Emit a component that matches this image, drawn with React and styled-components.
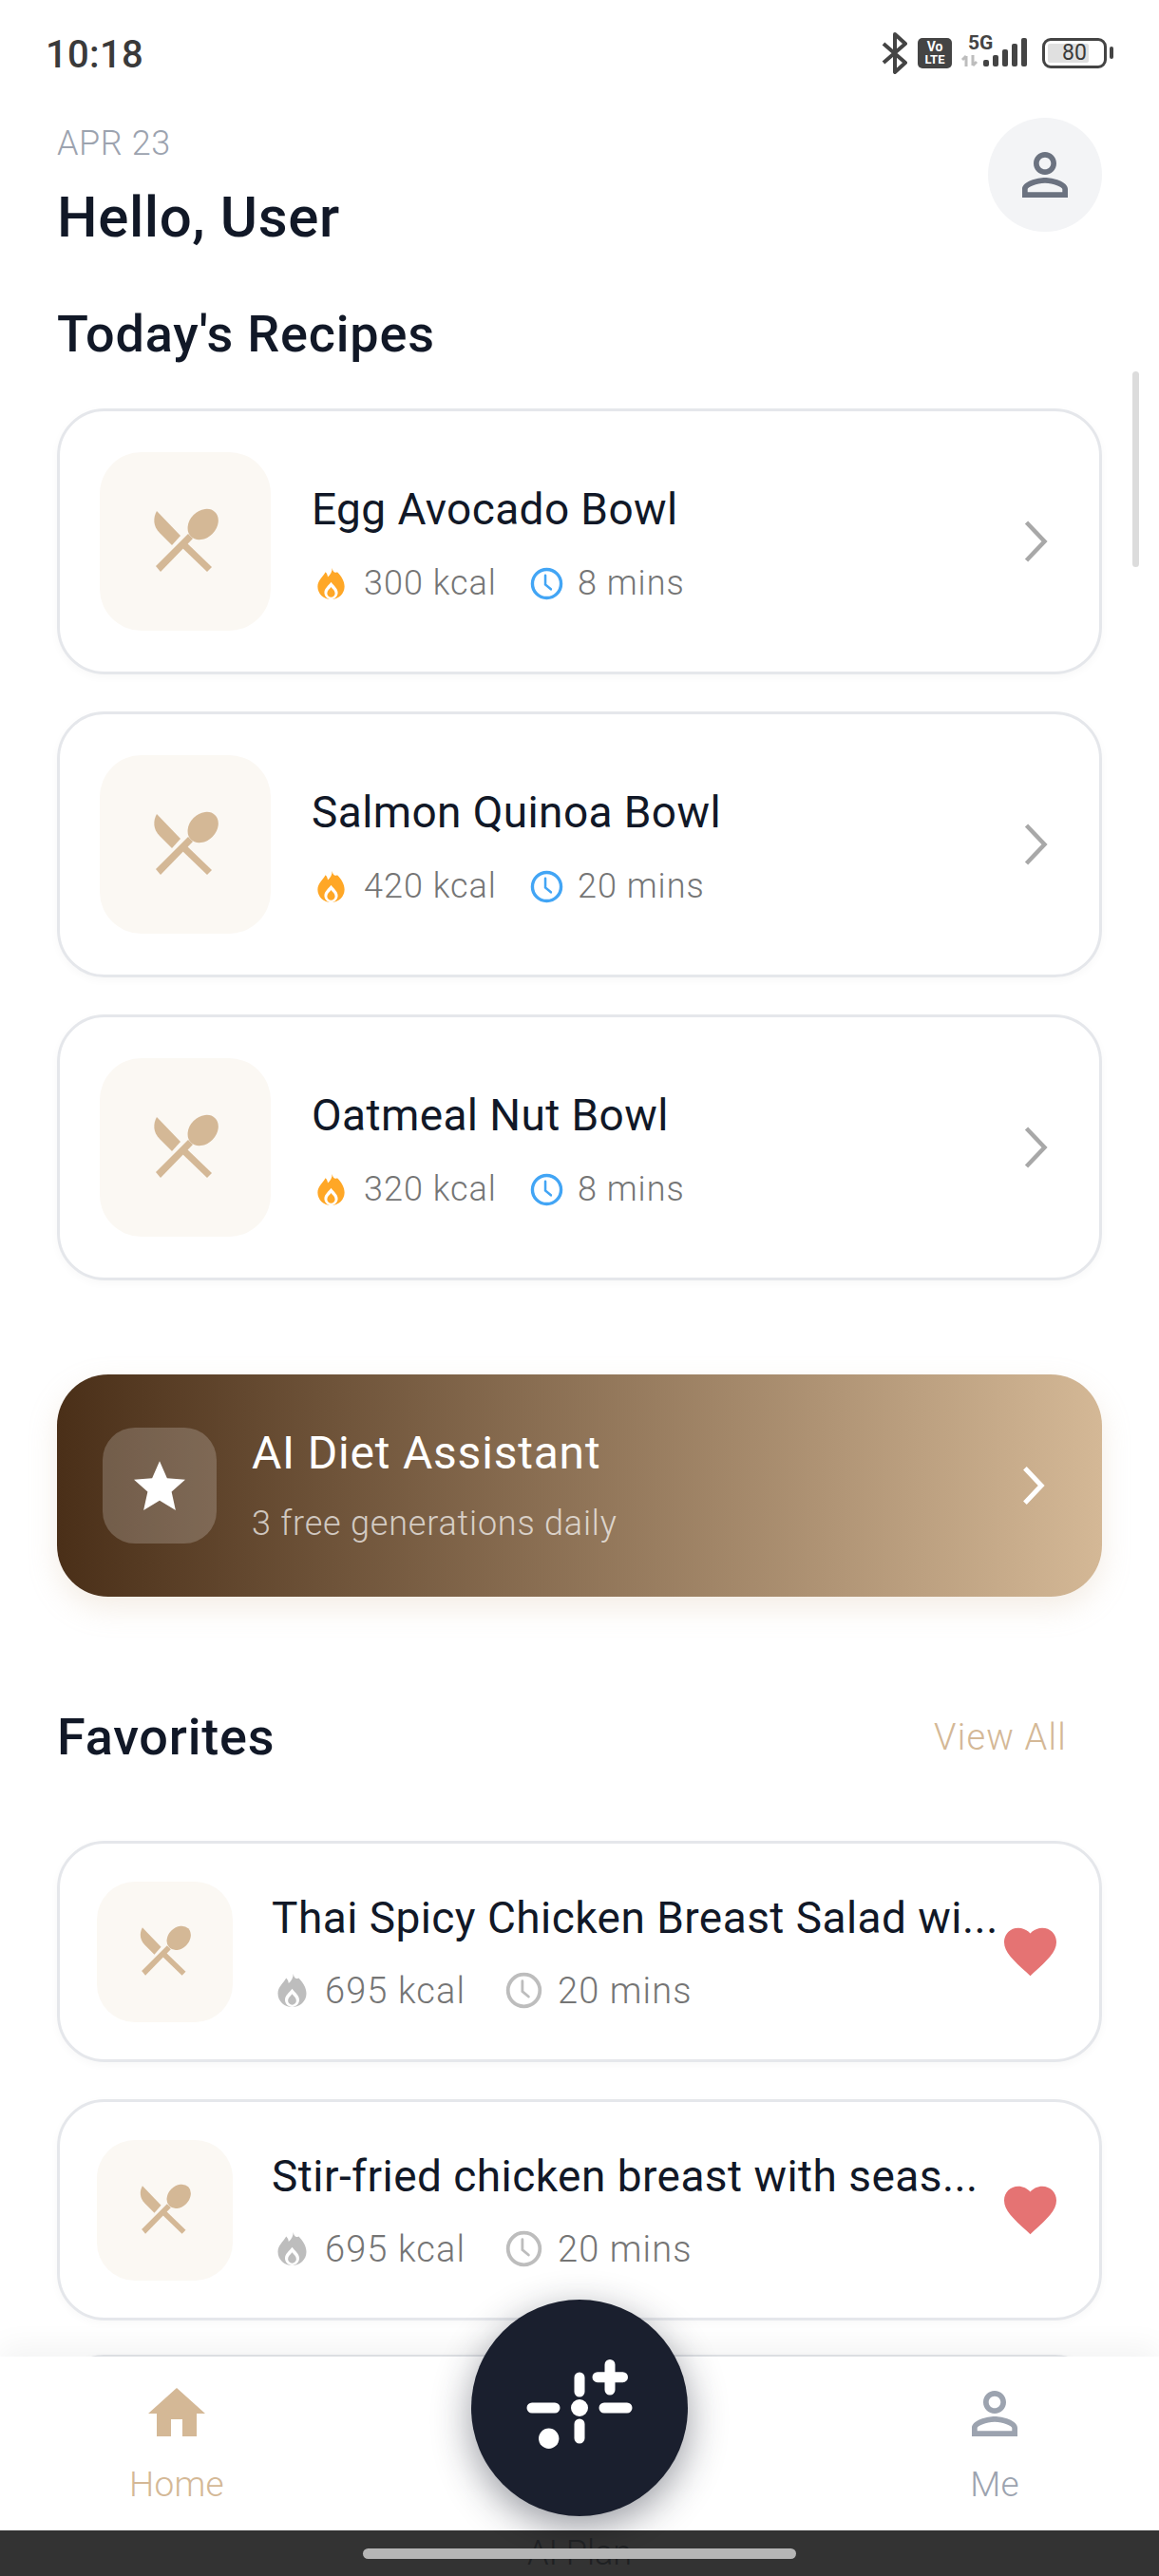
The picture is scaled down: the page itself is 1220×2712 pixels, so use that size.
import React from "react";
import styled, { createGlobalStyle } from "styled-components";

const GlobalStyle = createGlobalStyle`
  html, body {
    margin: 0;
    padding: 0;
    background: #ffffff;
    font-family: Roboto, "Liberation Sans", sans-serif;
  }
  * { box-sizing: border-box; }
`;

const Screen = styled.div`
  position: relative;
  width: 1220px;
  height: 2712px;
  display: flex;
  flex-direction: column;
  overflow: hidden;
  background: #ffffff;
`;

const StatusBar = styled.div`
  flex: none;
  height: 112px;
  padding: 0 55px 0 48px;
  display: flex;
  align-items: center;
  justify-content: space-between;
  color: #3a3a3a;
`;

const Clock = styled.span`
  font-size: 40px;
  font-weight: 500;
  letter-spacing: 0.3px;
  margin-top: 2px;
`;

const StatusIcons = styled.div`
  display: flex;
  align-items: center;
`;

const Battery = styled.div`
  position: relative;
  width: 68px;
  height: 32px;
  margin-left: 13px;
  border: 3px solid #444;
  border-radius: 9px;
  padding: 3px;
  display: flex;
  &::before {
    content: "";
    width: 43px;
    background: #e0e0e0;
    border-radius: 2px;
  }
  &::after {
    content: "";
    position: absolute;
    right: -10px;
    top: 6px;
    width: 4px;
    height: 13px;
    background: #444;
    border-radius: 2px;
  }
`;

const BatteryLevel = styled.span`
  position: absolute;
  left: 0;
  right: 0;
  top: -1px;
  text-align: center;
  font-size: 23px;
  line-height: 27px;
  color: #3a3a3a;
`;

const Content = styled.main`
  flex: 1;
  min-height: 0;
  overflow: hidden;
  padding: 12px 60px 0;
`;

const Header = styled.header`
  display: flex;
  justify-content: space-between;
  align-items: flex-start;
  height: 120px;
`;

const DateLabel = styled.div`
  font-size: 36px;
  line-height: 42px;
  font-weight: 300;
  letter-spacing: 0.6px;
  color: #9ca3af;
  margin-top: 6px;
`;

const Greeting = styled.h1`
  margin: 23px 0 0;
  font-size: 60px;
  line-height: 68px;
  font-weight: 500;
  letter-spacing: 0.6px;
  color: #111827;
`;

const Avatar = styled.div`
  width: 120px;
  height: 120px;
  border-radius: 50%;
  background: #f3f4f6;
  display: flex;
  align-items: center;
  justify-content: center;
`;

const SectionTitle = styled.h2`
  margin: ${(p) => p.$top}px 0 0;
  font-size: 54px;
  line-height: 64px;
  font-weight: 500;
  letter-spacing: 0.8px;
  color: #111827;
`;

const RecipeList = styled.div`
  display: flex;
  flex-direction: column;
  gap: 39px;
  margin-top: 46px;
`;

const Card = styled.article`
  display: flex;
  align-items: center;
  background: #ffffff;
  border: 3px solid #e5e7eb;
  border-radius: 50px;
  box-shadow: 0 3px 10px rgba(0, 0, 0, 0.03);
  height: ${(p) => (p.$fav ? 233 : 280)}px;
  padding-left: ${(p) => (p.$fav ? 39 : 42)}px;
  flex: none;
`;

// third favorite, only its top edge shows above the tab bar
const PeekCard = styled(Card)`
  margin-top: -3px;
`;

const Thumb = styled.div`
  flex: none;
  width: ${(p) => (p.$fav ? 143 : 180)}px;
  height: ${(p) => (p.$fav ? 148 : 188)}px;
  border-radius: ${(p) => (p.$fav ? 40 : 44)}px;
  background: #fbf8f3;
  display: flex;
  align-items: center;
  justify-content: center;
`;

const CardBody = styled.div`
  flex: 1;
  min-width: 0;
  margin-left: ${(p) => (p.$fav ? 41 : 43)}px;
  display: flex;
  flex-direction: column;
  gap: ${(p) => (p.$fav ? 28 : 29)}px;
  padding-top: ${(p) => (p.$fav ? 0 : 5)}px;
`;

const CardTitle = styled.div`
  font-size: 46px;
  line-height: 54px;
  color: #111827;
  letter-spacing: ${(p) => (p.$fav ? 0.45 : 0.4)}px;
  white-space: nowrap;
`;

const Meta = styled.div`
  display: flex;
  align-items: center;
  height: 44px;
  color: #757575;
  font-weight: 300;
  font-size: ${(p) => (p.$fav ? 38 : 36)}px;
  margin-left: 6px;
`;

const MetaItem = styled.span`
  display: flex;
  align-items: center;
  gap: ${(p) => p.$gap}px;
  margin-right: ${(p) => (p.$fav ? 42 : 35)}px;
  letter-spacing: ${(p) => (p.$fav ? 1.1 : 1)}px;
`;

const Chevron = styled.div`
  flex: none;
  display: flex;
  margin-right: 54px;
`;

const HeartSlot = styled.div`
  flex: none;
  display: flex;
  margin-right: 45px;
  margin-left: 8px;
`;

const Banner = styled.section`
  margin-top: 99px;
  height: 234px;
  border-radius: 54px;
  background: linear-gradient(90deg, #4a2f18 0%, #d4b896 100%);
  box-shadow: 0 12px 30px rgba(212, 184, 150, 0.25);
  display: flex;
  align-items: center;
  padding: 0 60px 0 48px;
`;

const BannerIcon = styled.div`
  flex: none;
  width: 120px;
  height: 122px;
  border-radius: 34px;
  background: rgba(255, 255, 255, 0.2);
  display: flex;
  align-items: center;
  justify-content: center;
`;

const BannerText = styled.div`
  flex: 1;
  margin-left: 37px;
  display: flex;
  flex-direction: column;
  gap: 24px;
`;

const BannerTitle = styled.div`
  font-size: 48px;
  line-height: 56px;
  letter-spacing: 0.8px;
  color: #ffffff;
`;

const BannerSub = styled.div`
  font-size: 36px;
  line-height: 44px;
  font-weight: 300;
  letter-spacing: 0.8px;
  color: rgba(255, 255, 255, 0.7);
`;

const FavHeader = styled.div`
  display: flex;
  justify-content: space-between;
  align-items: center;
  margin-top: 116px;
  height: 64px;
`;

const ViewAll = styled.a`
  font-size: 38px;
  font-weight: 300;
  letter-spacing: 1.2px;
  color: #d4b896;
  margin-right: 37px;
`;

const FavList = styled.div`
  display: flex;
  flex-direction: column;
  gap: 39px;
  margin-top: 77px;
`;

const Nav = styled.nav`
  position: relative;
  flex: none;
  height: 231px;
  background: #ffffff;
  box-shadow: 0 -10px 30px rgba(0, 0, 0, 0.05);
  display: grid;
  grid-template-columns: 372px 1fr 372px;
`;

const NavItem = styled.div`
  display: flex;
  flex-direction: column;
  align-items: center;
  padding-top: 24px;
  padding-left: ${(p) => p.$inset || 0}px;
  font-size: 37px;
  font-weight: 300;
  letter-spacing: 0.3px;
  line-height: 44px;
  color: ${(p) => p.$color};
`;

const NavLabel = styled.span`
  margin-top: 17px;
`;

const CenterItem = styled.div`
  display: flex;
  flex-direction: column;
  align-items: center;
  margin-top: -60px;
  font-size: 36px;
  font-weight: 300;
  line-height: 44px;
  color: #9ca3af;
`;

const Fab = styled.div`
  flex: none;
  width: 228px;
  height: 228px;
  border-radius: 50%;
  background: #1a1f2e;
  box-shadow: 0 12px 40px rgba(26, 31, 46, 0.45);
  display: flex;
  align-items: center;
  justify-content: center;
  margin-bottom: 17px;
`;

const GestureBar = styled.div`
  position: absolute;
  left: 0;
  right: 0;
  bottom: 0;
  height: 48px;
  background: rgba(0, 0, 0, 0.8);
  display: flex;
  justify-content: center;
  padding-top: 19px;
`;

const GestureHandle = styled.div`
  width: 456px;
  height: 11px;
  border-radius: 6px;
  background: #b5b5b5;
`;

const ScrollThumb = styled.div`
  position: absolute;
  left: 1192px;
  top: 391px;
  width: 7px;
  height: 206px;
  border-radius: 4px;
  background: #dcdcdc;
`;

const BluetoothIcon = () => (
  <svg width="28" height="44" viewBox="0 0 28 44" fill="none" stroke="#444" strokeWidth="4" strokeLinejoin="round">
    <path d="M2 12l23 20-11 10V2l11 10L2 32" />
  </svg>
);

const VolteIcon = () => (
  <svg width="36" height="32" viewBox="0 0 36 32" style={{ marginLeft: 10 }}>
    <rect width="36" height="32" rx="5" fill="#444" />
    <text x="18" y="14" textAnchor="middle" fontSize="14" fontWeight="700" fontFamily="Roboto" fill="#fff">Vo</text>
    <text x="18" y="27" textAnchor="middle" fontSize="13" fontWeight="700" fontFamily="Roboto" fill="#fff">LTE</text>
  </svg>
);

const SignalIcon = () => (
  <svg width="72" height="36" viewBox="0 0 72 36" style={{ marginLeft: 10, overflow: "visible" }}>
    <text x="7" y="14" fontSize="21" fontWeight="700" fontFamily="Roboto" fill="#444">5G</text>
    <path d="M5 32V21M1 25l4-4M12 20v11M16 27l-4 4" stroke="#bdbdbd" strokeWidth="3" fill="none" />
    <rect x="23" y="25" width="6" height="7" rx="2" fill="#444" />
    <rect x="33" y="20" width="6" height="12" rx="2" fill="#444" />
    <rect x="43" y="14" width="6" height="18" rx="2" fill="#444" />
    <rect x="53" y="8" width="6" height="24" rx="2" fill="#444" />
    <rect x="63" y="2" width="6" height="30" rx="2" fill="#444" />
  </svg>
);

const PersonIcon = ({ color }) => (
  <svg width="72" height="72" viewBox="0 0 24 24" fill={color}>
    <path d="M12 5.9c1.16 0 2.1.94 2.1 2.1s-.94 2.1-2.1 2.1S9.9 9.16 9.9 8s.94-2.1 2.1-2.1m0 9c2.97 0 6.1 1.46 6.1 2.1v1.1H5.9V17c0-.64 3.13-2.1 6.1-2.1M12 4C9.79 4 8 5.79 8 8s1.79 4 4 4 4-1.79 4-4-1.79-4-4-4zm0 9c-2.67 0-8 1.34-8 4v3h16v-3c0-2.66-5.33-4-8-4z" />
  </svg>
);

const HomeIcon = () => (
  <svg width="72" height="72" viewBox="0 0 24 24" fill="#d4b896">
    <path d="M10 20v-6h4v6h5v-8h3L12 3 2 12h3v8z" />
  </svg>
);

const UtensilsIcon = ({ size }) => (
  <svg width={size} height={size} viewBox="0 0 70 70" fill="#d4b896">
    <ellipse cx="53.700" cy="17" rx="18" ry="14" transform="rotate(-45 53.700 17)" />
    <path d="M38 27l5 5L9 67l-5-6z" />
    <path d="M31 41l5-5 27 26-5 5z" />
    <path d="M5 3l25 26-9 10L8 26C1 19 1 10 5 3z" />
  </svg>
);

const FlameIcon = ({ color, width, height }) => (
  <svg width={width} height={height} viewBox="0 0 24 28">
    <path
      fill={color}
      d="M13 0c.5 3.500 2.500 5 4.500 3.500C21 7 24 11.500 24 16.500 24 23 18.500 28 12 28S0 23 0 16.500C0 11 4.500 8 7 3.500 8.500 5 9 6.500 9 8c2.500-2 4-5 4-8z"
    />
    <path fill="#fff" d="M12 12.500c2.500 3.500 6 5.500 6 9.500 0 3-2.500 6-6 6s-6-3-6-6c0-4 3.500-6 6-9.500z" />
    <path fill={color} d="M12 17c1.500 2 3.500 3.200 3.500 5.600a3.500 3.500 0 0 1-7 0c0-2.400 2-3.600 3.500-5.600z" />
  </svg>
);

const ClockIcon = ({ color, size }) => (
  <svg width={size} height={size} viewBox="0 0 36 36" fill="none" stroke={color} strokeLinecap="round">
    <circle cx="18" cy="18" r="15.500" strokeWidth="3.500" />
    <path d="M16.500 9v10l6 5" strokeWidth="2.600" />
  </svg>
);

const ChevronIcon = ({ color, width, height, weight }) => (
  <svg width={width} height={height} viewBox="0 0 24 44" fill="none" stroke={color} strokeWidth={weight}>
    <path d="M2 2l19 20L2 42" />
  </svg>
);

const HeartIcon = () => (
  <svg width="55" height="52" viewBox="0 0 24 22" fill="#e57373">
    <path d="M12 22l-1.700-1.600C4.200 14.800 0 11 0 6.500 0 2.800 2.800 0 6.500 0 8.600 0 10.700 1 12 2.500 13.300 1 15.400 0 17.500 0 21.200 0 24 2.800 24 6.500c0 4.500-4.200 8.300-10.300 13.900L12 22z" />
  </svg>
);

const StarIcon = () => (
  <svg width="54" height="52" viewBox="0 0 24 23" fill="#fff">
    <path d="M12 0l3.500 8 8.500.7-6.400 5.700 1.900 8.600L12 18.500 4.500 23l1.900-8.600L0 8.700 8.500 8z" />
  </svg>
);

const AiPlanIcon = () => (
  <svg width="228" height="228" viewBox="0 0 228 228" fill="#fff" stroke="#fff" strokeLinecap="round">
    <g fill="none" strokeWidth="11">
      <path d="M114 82v15M114 131v15M64 114h24M140 114h24M146 68.500v26.500M133 81.700h26.500" />
    </g>
    <circle cx="114" cy="114" r="9" stroke="none" />
    <circle cx="81.700" cy="146.300" r="10.700" stroke="none" />
  </svg>
);

const recipes = [
  { name: "Egg Avocado Bowl", kcal: 300, mins: 8 },
  { name: "Salmon Quinoa Bowl", kcal: 420, mins: 20 },
  { name: "Oatmeal Nut Bowl", kcal: 320, mins: 8 },
];

const favorites = [
  { name: "Thai Spicy Chicken Breast Salad wi...", kcal: 695, mins: 20 },
  { name: "Stir-fried chicken breast with seas...", kcal: 695, mins: 20 },
];

const RecipeCard = ({ recipe }) => (
  <Card>
    <Thumb>
      <UtensilsIcon size={70} />
    </Thumb>
    <CardBody>
      <CardTitle>{recipe.name}</CardTitle>
      <Meta>
        <MetaItem $gap={20}>
          <FlameIcon color="#ffa726" width={29} height={33} />
          {recipe.kcal} kcal
        </MetaItem>
        <MetaItem $gap={15}>
          <ClockIcon color="#42a5f5" size={35} />
          {recipe.mins} mins
        </MetaItem>
      </Meta>
    </CardBody>
    <Chevron>
      <ChevronIcon color="#a8a8a8" width={25} height={44} weight={4.5} />
    </Chevron>
  </Card>
);

const FavoriteCard = ({ recipe }) => (
  <Card $fav>
    <Thumb $fav>
      <UtensilsIcon size={55} />
    </Thumb>
    <CardBody $fav>
      <CardTitle $fav>{recipe.name}</CardTitle>
      <Meta $fav>
        <MetaItem $fav $gap={19}>
          <FlameIcon color="#bdbdbd" width={31} height={35} />
          {recipe.kcal} kcal
        </MetaItem>
        <MetaItem $fav $gap={16}>
          <ClockIcon color="#bdbdbd" size={39} />
          {recipe.mins} mins
        </MetaItem>
      </Meta>
    </CardBody>
    <HeartSlot>
      <HeartIcon />
    </HeartSlot>
  </Card>
);

const App = () => {
  return (
    <Screen>
      <GlobalStyle />
      <StatusBar>
        <Clock>10:18</Clock>
        <StatusIcons>
          <BluetoothIcon />
          <VolteIcon />
          <SignalIcon />
          <Battery>
            <BatteryLevel>80</BatteryLevel>
          </Battery>
        </StatusIcons>
      </StatusBar>

      <Content>
        <Header>
          <div>
            <DateLabel>APR 23</DateLabel>
            <Greeting>Hello, User</Greeting>
          </div>
          <Avatar>
            <PersonIcon color="#6b7280" />
          </Avatar>
        </Header>

        <SectionTitle $top={76}>Today's Recipes</SectionTitle>
        <RecipeList>
          {recipes.map((r) => (
            <RecipeCard key={r.name} recipe={r} />
          ))}
        </RecipeList>

        <Banner>
          <BannerIcon>
            <StarIcon />
          </BannerIcon>
          <BannerText>
            <BannerTitle>AI Diet Assistant</BannerTitle>
            <BannerSub>3 free generations daily</BannerSub>
          </BannerText>
          <ChevronIcon color="#ffffff" width={24} height={40} weight={5.5} />
        </Banner>

        <FavHeader>
          <SectionTitle $top={0}>Favorites</SectionTitle>
          <ViewAll>View All</ViewAll>
        </FavHeader>
        <FavList>
          {favorites.map((r) => (
            <FavoriteCard key={r.name} recipe={r} />
          ))}
          <PeekCard $fav />
        </FavList>
      </Content>

      <ScrollThumb />

      <Nav>
        <NavItem $color="#d4b896">
          <HomeIcon />
          <NavLabel>Home</NavLabel>
        </NavItem>
        <CenterItem>
          <Fab>
            <AiPlanIcon />
          </Fab>
          <span>AI Plan</span>
        </CenterItem>
        <NavItem $color="#9ca3af" $inset={26}>
          <PersonIcon color="#9ca3af" />
          <NavLabel>Me</NavLabel>
        </NavItem>
        <GestureBar>
          <GestureHandle />
        </GestureBar>
      </Nav>
    </Screen>
  );
};

export default App;
